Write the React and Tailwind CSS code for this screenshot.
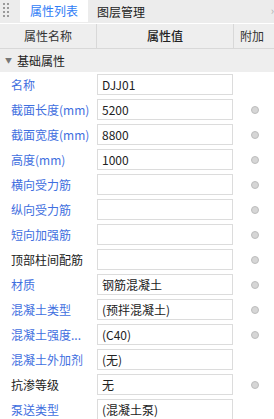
import React from "react";

const rows = [
  { name: "名称", value: "DJJ01", blue: true, dot: false },
  { name: "截面长度(mm)", value: "5200", blue: true, dot: true },
  { name: "截面宽度(mm)", value: "8800", blue: true, dot: true },
  { name: "高度(mm)", value: "1000", blue: true, dot: true },
  { name: "横向受力筋", value: "", blue: true, dot: true },
  { name: "纵向受力筋", value: "", blue: true, dot: true },
  { name: "短向加强筋", value: "", blue: true, dot: true },
  { name: "顶部柱间配筋", value: "", blue: false, dot: true },
  { name: "材质", value: "钢筋混凝土", blue: true, dot: true },
  { name: "混凝土类型", value: "(预拌混凝土)", blue: true, dot: true },
  { name: "混凝土强度...", value: "(C40)", blue: true, dot: true },
  { name: "混凝土外加剂", value: "(无)", blue: true, dot: false },
  { name: "抗渗等级", value: "无", blue: false, dot: true },
  { name: "泵送类型", value: "(混凝土泵)", blue: true, dot: false },
];

const App = () => {
  return (
    <div
      className="w-[274px] h-[419px] overflow-hidden bg-white text-[12px] leading-none"
      style={{ fontFamily: '"Noto Sans CJK SC", "Noto Sans", sans-serif' }}
    >
      {/* Tabs */}
      <div className="h-[23px] bg-[#ececec] flex items-stretch relative">
        <div className="w-[20px] flex items-start pl-[3px] pt-[3px]">
          <div className="grid grid-cols-2 gap-x-[2px] gap-y-[2px]">
            {[0, 1, 2, 3, 4, 5, 6, 7].map((i) => (
              <div key={i} className="w-[2px] h-[2px] bg-[#9a9a9a]" />
            ))}
          </div>
        </div>
        <div className="w-[68px] h-[22px] bg-white flex items-center justify-center text-[#2f7cf6]">
          属性列表
        </div>
        <div className="flex items-center pl-[9px] text-[#222]">图层管理</div>
        <div className="absolute right-0 top-[5px] text-[#b0b0b0] text-[11px]">›</div>
      </div>
      <div className="h-px bg-white" />

      {/* Header */}
      <div className="h-[25px] bg-[#eeeeee] flex border-b border-[#d8d8d8]">
        <div className="w-[97px] flex items-center justify-center text-[#333] border-r border-[#d8d8d8]">
          属性名称
        </div>
        <div className="w-[137px] flex items-center justify-center text-[#222] font-medium border-r border-[#d8d8d8]">
          属性值
        </div>
        <div className="flex-1 flex items-center pl-[6px] text-[#333]">附加</div>
      </div>

      {/* Group */}
      <div className="h-[23px] bg-[#eeeeee] flex items-center">
        <span className="pl-[5px] pr-[5px] text-[7px] text-[#777]">▼</span>
        <span className="text-[#222]">基础属性</span>
      </div>

      {/* Rows */}
      <div className="flex flex-col">
        {rows.map((r) => (
          <div key={r.name} className="h-[25px] flex items-center">
            <div
              className={
                "w-[97px] pl-[11px] whitespace-nowrap " +
                (r.blue ? "text-[#3f6fe0]" : "text-[#222]")
              }
            >
              {r.name}
            </div>
            <div className="w-[136px] h-[21px] border border-[#dcdcdc] bg-white flex items-center pl-[4px] text-[#222] whitespace-nowrap overflow-hidden">
              {r.value}
            </div>
            <div className="flex-1 flex justify-center pl-[3px]">
              {r.dot && (
                <div className="w-[8px] h-[8px] rounded-full bg-[#d6d6d6] border border-[#bdbdbd]" />
              )}
            </div>
          </div>
        ))}
      </div>
    </div>
  );
};

export default App;
